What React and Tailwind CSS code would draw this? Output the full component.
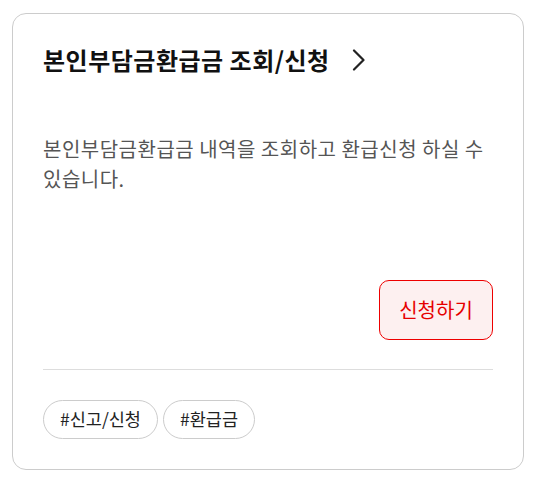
export default function App() {
  const font = { fontFamily: '"Noto Sans CJK KR", "Noto Sans", sans-serif' };
  return (
    <div className="w-[534px] h-[485px] bg-white pt-[13px] pl-[12px]" style={font}>
      <div className="w-[512px] h-[457px] border border-[#cccccc] rounded-[14px] px-[30px] pt-[30px] pb-[30px] flex flex-col">
        <div className="flex items-center h-[32px] gap-[22px]">
          <span className="text-[24px] leading-[32px] font-bold text-[#111111] tracking-[0.5px]">본인부담금환급금 조회/신청</span>
          <svg width="14" height="22" viewBox="0 0 14 22" fill="none" className="mt-[-1px]">
            <path d="M2 1.5 L11.5 11 L2 20.5" stroke="#222" strokeWidth="2.2" strokeLinecap="round" strokeLinejoin="round" />
          </svg>
        </div>
        <p className="mt-[58px] text-[20px] leading-[30px] text-[#555555] tracking-[0.5px]">
          본인부담금환급금 내역을 조회하고 환급신청 하실 수 있습니다.
        </p>
        <div className="flex justify-end mt-auto">
          <button className="w-[114px] h-[60px] rounded-[10px] border border-[#ee0000] bg-[#fdf0f0] text-[#e60000] text-[20px]">
            신청하기
          </button>
        </div>
        <div className="mt-[29px] h-px bg-[#dddddd]" />
        <div className="mt-[30px] flex gap-[5px]">
          <span className="h-[39px] px-[16px] rounded-full border border-[#cccccc] flex items-center text-[17.5px] text-[#222222]">#신고/신청</span>
          <span className="h-[39px] px-[16px] rounded-full border border-[#cccccc] flex items-center text-[17.5px] text-[#222222]">#환급금</span>
        </div>
      </div>
    </div>
  );
}
